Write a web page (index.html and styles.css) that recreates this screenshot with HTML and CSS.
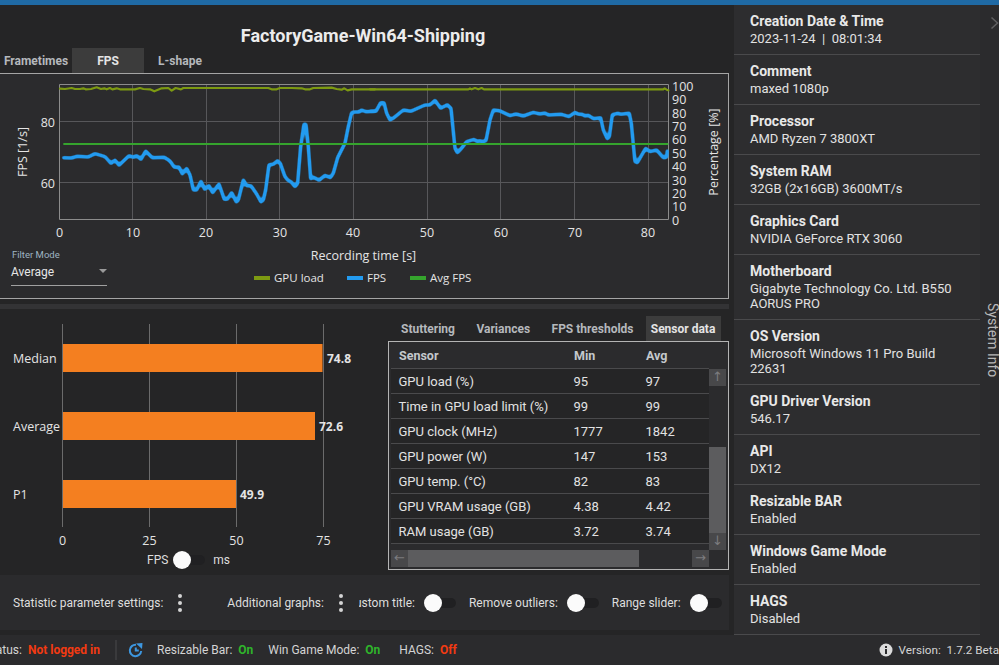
FILE: index.html
```html
<!DOCTYPE html>
<html lang="en">
<head>
<meta charset="utf-8">
<title>FactoryGame-Win64-Shipping</title>
<link rel="stylesheet" href="styles.css">
</head>
<body>
<div class="app">
  <div class="topbar"></div>
  <div class="workspace">
    <main class="main">
      <h1 class="title">FactoryGame-Win64-Shipping</h1>
      <div class="tabs chart-tabs">
        <span class="tab">Frametimes</span>
        <span class="tab active">FPS</span>
        <span class="tab">L-shape</span>
      </div>
      <section class="chart-panel">
        <svg class="fps-chart" width="728" height="224" viewBox="0 74 728 224">
          <defs>
            <filter id="soft" x="-5%" y="-20%" width="110%" height="140%" color-interpolation-filters="sRGB">
              <feGaussianBlur stdDeviation="2.500"/>
              <feComponentTransfer><feFuncA type="linear" slope="2.500" intercept="-0.750"/></feComponentTransfer>
            </filter>
          </defs>
          <g class="grid">
            <path d="M132.5 84V219M206.5 84V219M279.5 84V219M353.5 84V219M427.5 84V219M500.5 84V219M574.5 84V219M648.5 84V219M60 121.5H668M60 182.5H668"/>
          </g>
          <path class="plot-frame" d="M59.5 219.5V84.5H668.5V219.5Z"/>
          <g class="series-zoom-a">
            <polyline class="olive" points="15,26 30,27 50,24 60,27 75,27 85,25 92,28 108,27 125,22 138,27 148,25 155,28 165,24 172,28 185,25 195,28 240,28 255,24 265,27 285,28 298,34 320,25 340,24 350,32 362,24 378,28 385,24 640,24 650,28 665,28 675,24 710,24 740,25 750,28 765,28 775,24 830,23 845,27 860,29 868,25 878,31 890,28 960,28"/>
            <polyline class="fps" filter="url(#soft)" points="25,233 50,234 65,229 100,231 120,221 150,230 168,250 180,240 192,256 222,227 235,232 245,227 258,238 272,213 292,233 328,232 345,243 358,262 372,261 382,282 395,265 405,285 415,330 425,330 438,304 449,328 462,317 473,338 492,312 508,358 517,358 530,338 544,366 550,360 565,300 575,317 588,317 605,342 618,366 625,360 632,330 642,254 655,253 668,242 676,250 690,290 700,302 708,305 720,320 728,310 737,200 747,133 753,133 760,200 767,296 776,292 792,301 810,286 826,293 835,280 848,233 870,190 880,140 890,98 897,96 912,96 920,90 932,95 960,94"/>
            <polyline class="avg" points="25,192 960,192"/>
          </g>
          <g class="series-zoom-b">
            <polyline class="olive" points="0,28 295,28 300,25 305,28 315,24 325,28 335,24 342,28 880,28 884,25 890,29 895,31"/>
            <polyline class="fps" filter="url(#soft)" points="0,94 18,94 32,68 42,68 50,100 60,120 72,113 100,90 122,94 165,75 180,75 195,61 212,85 232,74 243,85 255,205 262,218 272,208 290,185 312,178 322,185 330,182 338,186 348,182 360,120 370,90 388,92 420,107 438,102 460,108 490,97 510,102 525,99 535,105 575,103 597,110 615,97 625,103 637,103 645,108 655,106 670,116 692,113 700,150 712,176 718,170 727,104 745,100 752,103 778,100 784,130 795,245 802,248 827,205 840,215 860,210 880,233 890,232 892,212"/>
            <polyline class="avg" points="0,192 895,192"/>
          </g>
          <g class="axis-text">
            <text x="55" y="127" class="end">80</text>
            <text x="55" y="188" class="end">60</text>
            <text x="59.5" y="237" class="mid">0</text>
            <text x="133" y="237" class="mid">10</text>
            <text x="206" y="237" class="mid">20</text>
            <text x="280" y="237" class="mid">30</text>
            <text x="353" y="237" class="mid">40</text>
            <text x="427" y="237" class="mid">50</text>
            <text x="501" y="237" class="mid">60</text>
            <text x="575" y="237" class="mid">70</text>
            <text x="648" y="237" class="mid">80</text>
            <text x="672" y="91">100</text>
            <text x="672" y="104">90</text>
            <text x="672" y="118">80</text>
            <text x="672" y="131">70</text>
            <text x="672" y="144">60</text>
            <text x="672" y="158">50</text>
            <text x="672" y="171">40</text>
            <text x="672" y="185">30</text>
            <text x="672" y="198">20</text>
            <text x="672" y="211">10</text>
            <text x="672" y="225">0</text>
            <text class="mid" transform="translate(27 152) rotate(-90)">FPS [1/s]</text>
            <text class="mid" transform="translate(718 152) rotate(-90)">Percentage [%]</text>
            <text x="363.5" y="260" class="mid">Recording time [s]</text>
            <text class="legend" x="274" y="282">GPU load</text>
            <text class="legend" x="367" y="282">FPS</text>
            <text class="legend" x="430" y="282">Avg FPS</text>
          </g>
          <rect class="sw-olive" x="254" y="276" width="16" height="4"/>
          <rect class="sw-fps" x="347" y="276" width="16" height="4"/>
          <rect class="sw-avg" x="410" y="276" width="16" height="4"/>
        </svg>
        <div class="filter">
          <div class="filter-label">Filter Mode</div>
          <div class="filter-select"><span>Average</span><i class="caret"></i></div>
        </div>
      </section>
      <div class="splitter"></div>
      <section class="lower">
        <div class="bars">
          <svg class="bar-chart" width="380" height="241" viewBox="0 309 380 241">
            <path class="bar-grid" d="M62.5 324V527M149.5 324V527M236.5 324V527M323.5 324V527"/>
            <rect class="bar" x="63" y="344" width="259.500" height="28"/>
            <rect class="bar" x="63" y="412" width="252" height="28"/>
            <rect class="bar" x="63" y="480" width="173" height="28"/>
            <g class="bar-text">
              <text x="13" y="363">Median</text>
              <text x="13" y="431">Average</text>
              <text x="13" y="499">P1</text>
              <text class="val" x="327" y="363">74.8</text>
              <text class="val" x="319" y="431">72.6</text>
              <text class="val" x="240" y="499">49.9</text>
              <text class="mid" x="62.5" y="545">0</text>
              <text class="mid" x="149.5" y="545">25</text>
              <text class="mid" x="236.5" y="545">50</text>
              <text class="mid" x="323.5" y="545">75</text>
            </g>
          </svg>
          <div class="unit-switch">
            <span>FPS</span><span class="toggle"></span><span>ms</span>
          </div>
        </div>
        <div class="sensor-side">
          <div class="tabs sensor-tabs">
            <span class="tab">Stuttering</span>
            <span class="tab">Variances</span>
            <span class="tab">FPS thresholds</span>
            <span class="tab active">Sensor data</span>
          </div>
          <div class="table-box">
            <div class="row head"><span>Sensor</span><span>Min</span><span>Avg</span></div>
            <div class="table-body">
              <div class="rows">
                <div class="row"><span>GPU load (%)</span><span>95</span><span>97</span></div>
                <div class="row"><span>Time in GPU load limit (%)</span><span>99</span><span>99</span></div>
                <div class="row"><span>GPU clock (MHz)</span><span>1777</span><span>1842</span></div>
                <div class="row"><span>GPU power (W)</span><span>147</span><span>153</span></div>
                <div class="row"><span>GPU temp. (°C)</span><span>82</span><span>83</span></div>
                <div class="row"><span>GPU VRAM usage (GB)</span><span>4.38</span><span>4.42</span></div>
                <div class="row"><span>RAM usage (GB)</span><span>3.72</span><span>3.74</span></div>
              </div>
              <div class="vscroll">
                <span class="sb-btn">↑</span>
                <span class="sb-track-top"></span>
                <span class="sb-thumb-v"></span>
                <span class="sb-btn">↓</span>
              </div>
            </div>
            <div class="hscroll">
              <span class="sb-btn">←</span>
              <span class="sb-thumb-h"></span>
              <span class="sb-track-right"></span>
              <span class="sb-btn">→</span>
            </div>
          </div>
        </div>
      </section>
      <section class="settings">
        <span class="set-label first">Statistic parameter settings:</span>
        <span class="dots"><i></i><i></i><i></i></span>
        <span class="set-label second">Additional graphs:</span>
        <span class="dots"><i></i><i></i><i></i></span>
        <span class="clip-label"><span>Custom title:</span></span>
        <span class="toggle"></span>
        <span class="set-label third">Remove outliers:</span>
        <span class="toggle"></span>
        <span class="set-label fourth">Range slider:</span>
        <span class="toggle"></span>
      </section>
    </main>
    <aside class="sidebar">
      <div class="info"><b>Creation Date &amp; Time</b><span>2023-11-24&nbsp; |&nbsp; 08:01:34</span></div>
      <div class="info"><b>Comment</b><span>maxed 1080p</span></div>
      <div class="info"><b>Processor</b><span>AMD Ryzen 7 3800XT</span></div>
      <div class="info"><b>System RAM</b><span>32GB (2x16GB) 3600MT/s</span></div>
      <div class="info"><b>Graphics Card</b><span>NVIDIA GeForce RTX 3060</span></div>
      <div class="info"><b>Motherboard</b><span>Gigabyte Technology Co. Ltd. B550 AORUS PRO</span></div>
      <div class="info"><b>OS Version</b><span>Microsoft Windows 11 Pro Build 22631</span></div>
      <div class="info"><b>GPU Driver Version</b><span>546.17</span></div>
      <div class="info"><b>API</b><span>DX12</span></div>
      <div class="info"><b>Resizable BAR</b><span>Enabled</span></div>
      <div class="info"><b>Windows Game Mode</b><span>Enabled</span></div>
      <div class="info"><b>HAGS</b><span>Disabled</span></div>
    </aside>
    <div class="rail">
      <svg class="chev" width="10" height="16" viewBox="0 0 10 16"><path d="M1.500 2.500 7.500 8l-6 5.500"/></svg>
      <span class="rail-label">System Info</span>
    </div>
  </div>
  <footer class="status">
    <div class="status-clip"><span class="status-inner">Status:&nbsp; <b class="red">Not logged in</b></span></div>
    <span class="vsep"></span>
    <svg class="refresh" width="16" height="16" viewBox="0 0 16 16"><path d="M13.200 9A5.700 5.700 0 1 1 8 2.800M7.800 5.500v3h3"/><polygon class="refresh-head" points="8,1.500 14.500,1 14,7"/></svg>
    <span class="st first-st">Resizable Bar:&nbsp; <b class="green">On</b></span>
    <span class="st">Win Game Mode:&nbsp; <b class="green">On</b></span>
    <span class="st hags">HAGS:&nbsp; <b class="red">Off</b></span>
    <span class="version">
      <svg width="14" height="14" viewBox="0 0 14 14"><circle class="inf-c" cx="7" cy="7" r="6.500"/><rect class="inf-i" x="6" y="6" width="2" height="5"/><rect class="inf-i" x="6" y="3" width="2" height="2"/></svg>
      <span class="version-text">Version:&nbsp; 1.7.2 Beta</span>
    </span>
  </footer>
</div>
</body>
</html>
```
FILE: styles.css
```css
* { box-sizing: border-box; }
html, body { margin: 0; padding: 0; height: 100%; }
body { background: #252526; color: #e6e6e6; font-family: Roboto, "Liberation Sans", sans-serif; font-size: 13px; overflow: hidden; }
.app { width: 999px; height: 665px; display: flex; flex-direction: column; overflow: hidden; }
.topbar { height: 5px; background: #1f6aa5; flex: none; }
.workspace { display: flex; height: 630px; flex: none; background: #2b2b2d; }

.main { width: 734px; flex: none; background: #252526; display: flex; flex-direction: column; }
.title { margin: 0; height: 43px; padding: 20px 3px 0 0; font-size: 18px; line-height: 22px; font-weight: 700; text-align: center; color: #ececec; width: 729px; }
.tabs { display: flex; font-weight: 700; color: #b5b8bc; font-size: 12px; white-space: nowrap; }
.chart-tabs { height: 25px; }
.chart-tabs .tab { width: 72px; display: flex; align-items: center; justify-content: center; }
.tab.active { background: #3c3c3c; color: #e4e4e4; }

.chart-panel { position: relative; width: 729px; height: 226px; background: #2b2b2d; border-top: 1px solid #a5a5a5; border-right: 1px solid #a5a5a5; border-bottom: 1px solid #a5a5a5; flex: none; }
.fps-chart { display: block; }
.grid path { stroke: #57575a; stroke-width: 1; fill: none; }
.plot-frame { fill: none; stroke: #8c8c8c; stroke-width: 1; }
.series-zoom-a { transform: translate(55px, 80px) scale(0.3333); }
.series-zoom-b { transform: translate(370px, 80px) scale(0.3333); }
.olive, .avg, .fps { fill: none; stroke-linejoin: round; stroke-linecap: round; }
.olive { stroke: #7d9a12; stroke-width: 6.500; }
.avg { stroke: #35a42d; stroke-width: 6; stroke-linecap: butt; }
.fps { stroke: #239bf0; stroke-width: 10.500; }
.axis-text text { font-family: "Open Sans", sans-serif; font-size: 12.500px; fill: #e4e4e4; }
.axis-text .legend { font-size: 11.500px; }
.mid { text-anchor: middle; }
.end { text-anchor: end; }
.sw-olive { fill: #7d9a12; }
.sw-fps { fill: #239bf0; }
.sw-avg { fill: #35a42d; }

.filter { position: absolute; left: 11px; top: 175px; width: 96px; }
.filter-label { font-size: 9.500px; line-height: 12px; color: #9fb4c2; padding-left: 1px; }
.filter-select { height: 23px; margin-top: 2px; border-bottom: 1px solid #a0a0a0; position: relative; font-size: 12px; line-height: 18px; color: #e6e6e6; }
.caret { position: absolute; right: 0; top: 6px; width: 0; height: 0; border-left: 4px solid transparent; border-right: 4px solid transparent; border-top: 4px solid #9a9a9a; }

.splitter { height: 5px; margin-top: 5px; background: #333335; width: 729px; flex: none; }

.lower { height: 266px; display: flex; flex: none; }
.bars { width: 380px; flex: none; }
.bar-chart { display: block; }
.bar-grid { stroke: #6b6b6b; stroke-width: 1; fill: none; }
.bar { fill: #f47f20; }
.bar-text text { font-family: "Open Sans", sans-serif; font-size: 12.500px; fill: #e4e4e4; }
.bar-text .val { font-weight: 700; font-size: 12px; }
.unit-switch { display: flex; align-items: center; padding-left: 147px; height: 18px; margin-top: 1px; font-size: 12px; color: #dedede; }
.unit-switch .toggle { margin: 0 8px 0 5px; }

.toggle { position: relative; display: inline-block; width: 32px; height: 10px; border-radius: 5px; background: #202022; flex: none; }
.toggle::before { content: ""; position: absolute; left: 0; top: -4px; width: 18px; height: 18px; border-radius: 50%; background: #fbfbfb; }

.sensor-side { width: 341px; margin-left: 8px; flex: none; display: flex; flex-direction: column; }
.sensor-tabs { height: 25px; margin-top: 7px; padding-left: 13px; color: #b5b8bc; }
.sensor-tabs .tab { display: flex; align-items: center; }
.sensor-tabs .tab + .tab { margin-left: 21.500px; }
.sensor-tabs .tab.active { margin-left: 12px; width: 75px; justify-content: center; }

.table-box { width: 341px; height: 229px; border: 1px solid #b4b4b4; background: #2b2b2d; padding: 0 0 0 2px; }
.row { display: grid; grid-template-columns: 175px 72px 1fr; align-items: center; height: 25px; padding-left: 7.500px; border-bottom: 1px solid #4a4a4c; color: #e2e2e2; background: #252526; font-size: 13px; }
.row.head { height: 27px; width: 318px; background: #2b2b2d; color: #c4c8cc; font-weight: 700; padding-left: 8px; font-size: 12.500px; }
.table-body { display: flex; height: 181px; }
.rows { width: 318px; flex: none; }
.vscroll { width: 17px; display: flex; flex-direction: column; background: #2b2b2d; }
.sb-btn { width: 17px; height: 17px; background: #48484a; color: #7c7c7f; font-size: 13px; line-height: 16px; text-align: center; flex: none; font-family: "DejaVu Sans", sans-serif; }
.sb-track-top { height: 61px; }
.sb-thumb-v { height: 86px; background: #5c5c5e; }
.hscroll { display: flex; height: 17px; width: 318px; background: #2b2b2d; }
.sb-thumb-h { width: 231px; background: #5c5c5e; }
.sb-track-right { width: 53px; }

.settings { height: 55px; width: 729px; flex: none; background: #2b2b2d; display: flex; align-items: center; font-size: 12px; color: #dedede; padding-left: 13px; white-space: nowrap; }
.dots { display: flex; flex-direction: column; gap: 3px; margin-left: 15px; width: 6px; flex: none; }
.dots i { width: 4px; height: 4px; border-radius: 50%; background: #d4d4d4; display: block; }
.set-label { flex: none; }
.set-label.second { margin-left: 43px; }
.clip-label { width: 56px; margin-left: 14px; overflow: hidden; display: flex; justify-content: flex-end; margin-right: 9px; flex: none; }
.clip-label span { flex: none; }
.set-label.third, .set-label.fourth { margin-left: 13px; margin-right: 9px; }

.sidebar { width: 246px; flex: none; background: #2d2d2f; overflow: hidden; }
.info { padding: 8px 0 8px 16px; border-bottom: 1px solid #4a4a4c; width: 246px; }
.info b { display: block; font-size: 14px; line-height: 17px; color: #e8e8e8; }
.info span { display: block; font-size: 13px; line-height: 15px; color: #e2e2e2; padding-right: 18px; margin-top: 1px; }

.rail { width: 19px; flex: none; position: relative; background: #2b2b2d; }
.chev { position: absolute; left: 10px; top: 10px; fill: none; stroke: #606062; stroke-width: 1.500; }
.rail-label { position: absolute; left: 5px; top: 298px; writing-mode: vertical-rl; font-size: 14px; color: #b8b8b8; white-space: nowrap; }

.status { height: 30px; flex: none; display: flex; align-items: center; background: #2b2b2d; font-size: 12px; color: #d4d4d4; }
.status-clip { width: 100px; overflow: hidden; display: flex; justify-content: flex-end; white-space: nowrap; flex: none; }
.status-inner { flex: none; }
.vsep { width: 2px; height: 20px; background: #3a3a3c; margin-left: 15px; flex: none; }
.refresh { margin-left: 11px; fill: none; stroke: #3d97e0; stroke-width: 2; flex: none; }
.refresh-head { fill: #3d97e0; stroke: none; }
.st { margin-left: 15px; flex: none; }
.st.first-st { margin-left: 13px; }
.st.hags { margin-left: 19px; }
.red { color: #f23a12; }
.green { color: #2fb52b; }
.version { margin-left: auto; display: flex; align-items: center; gap: 6px; white-space: nowrap; }
.version-text { font-size: 11.700px; }
.inf-c { fill: #dcdcdc; }
.inf-i { fill: #2b2b2d; }
```
